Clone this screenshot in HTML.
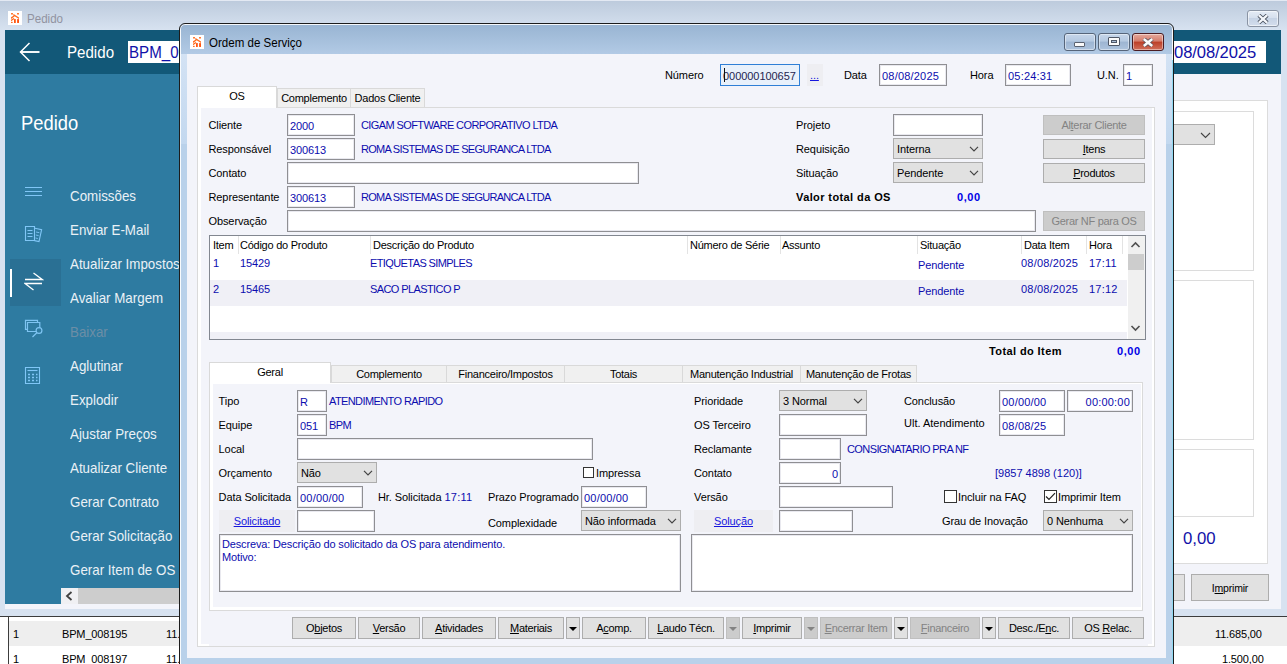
<!DOCTYPE html>
<html><head><meta charset="utf-8"><title>Ordem de Serviço</title>
<style>
*{box-sizing:border-box;margin:0;padding:0}
html,body{width:1287px;height:664px;overflow:hidden;background:#d9e3f0;font-family:"Liberation Sans",sans-serif;font-size:11px;color:#000}
.a{position:absolute}
.t{position:absolute;white-space:pre;line-height:14px;height:14px;font-size:11px;letter-spacing:-.1px}
.b{color:#0c0cae}
.u{letter-spacing:-.6px}
.dt{letter-spacing:.2px!important}
.n{letter-spacing:0!important}
.in{position:absolute;background:#fff;border:1px solid #8f8f93;height:22px;font-size:11px;line-height:22px;letter-spacing:-.1px;color:#0c0cae;padding-left:2px;white-space:pre;overflow:hidden;box-shadow:inset 0 0 0 1px #e9e9ef}
.sel{position:absolute;background:#e1e1e1;border:1px solid #adadad;height:21px;font-size:11px;line-height:21px;padding-left:3px;white-space:pre;letter-spacing:-.1px}
.sel svg{position:absolute;right:3px;top:7px}
.btn{letter-spacing:-.3px;position:absolute;background:#e1e1e1;border:1px solid #adadad;height:22px;font-size:11px;line-height:20px;text-align:center;white-space:pre}
.btn.d{background:#cccccc;border-color:#bfbfbf;color:#838383}
.btn u{text-decoration:underline}
.tab{letter-spacing:-.25px;position:absolute;background:#f0f0f0;border:1px solid #d9d9d9;border-bottom:none;text-align:center;font-size:11px;white-space:pre}
.tab.s{background:#fff}
.wb{border:1px solid #56657a;border-radius:3px;background:linear-gradient(#c6d6ea 0,#b5c9e1 45%,#9db5d2 50%,#adc3dd 100%);box-shadow:inset 0 0 0 1px rgba(255,255,255,.45)}
.gl{top:236px;width:1px;height:18px;background:#e3e3e3}
.gh{letter-spacing:-.25px}
.cb{width:11px;height:11px;border:1px solid #333;background:#fff}
.ar:after{content:"";position:absolute;left:2px;top:9px;border:4px solid transparent;border-top:4px solid #000;border-bottom:none}
.ar.d:after{border-top-color:#838383}
.sx{transform-origin:0 0;letter-spacing:0!important}
.mi{position:absolute;left:70px;color:#eaf1f6;font-size:14.5px;line-height:20px;height:20px;white-space:pre;transform-origin:0 0;transform:scaleX(.92)}
</style></head><body>
<!-- ================= OUTER WINDOW ================= -->
<div class="a" id="ow" style="left:0;top:0;width:1287px;height:664px;background:linear-gradient(#bccadc 0,#d7e2f0 30px,#d7e2f0 100%)"></div>
<div class="a" style="left:0;top:0;width:1287px;height:1px;background:#e3e9f3"></div>
<!-- title -->
<div class="a" id="oicon" style="left:8px;top:11px;width:14px;height:14px"><svg width="14" height="14" viewBox="0 0 14 14" style="display:block"><rect width="14" height="14" fill="#fff"/><g fill="#ff6a1c"><rect x="3" y="2" width="2" height="1.6" rx=".6"/><rect x="9" y="2" width="2" height="1.6" rx=".6"/><path d="M5.6 3l5.4 3.4v1.7L5 4.3z"/><path d="M3 6.2l2.8-1.6.9 1L3 8z"/><path d="M3 8.8l2.6-1.7.9 1L3 10.3z"/><rect x="6" y="8" width="1.8" height="4" rx=".5" fill="#ff5410"/><rect x="9.1" y="8" width="1.9" height="4" rx=".5" fill="#ff5410"/><rect x="3" y="10.8" width="1.7" height="1.3" rx=".4"/></g></svg></div>
<div class="t sx" style="left:27px;top:11px;font-size:12px;color:#9193a0;line-height:16px;height:16px;transform:scaleX(.965)">Pedido</div>
<div class="a" id="oclose" style="left:1247px;top:10px;width:32px;height:17px;border:1px solid #8a94a4;border-radius:3px;background:linear-gradient(#e4ebf5 0,#d6e0ee 45%,#c6d3e5 50%,#d3deed 100%);box-shadow:inset 0 0 0 1px rgba(255,255,255,.55)"><svg width="12" height="10" viewBox="0 0 12 10" style="position:absolute;left:9px;top:2.5px"><path d="M1.800 1.200l8.400 7.600M10.200 1.200l-8.400 7.600" stroke="#48505e" stroke-width="4"/><path d="M1.800 1.200l8.400 7.600M10.200 1.200l-8.400 7.600" stroke="#f4f6fa" stroke-width="2.300"/></svg></div>
<!-- header bar -->
<div class="a" style="left:5px;top:30px;width:1276px;height:44px;background:#125878"></div>
<div class="t sx" style="left:67px;top:42px;font-size:16.8px;line-height:22px;height:22px;color:#fff;transform:scaleX(.9)">Pedido</div>
<div class="a" style="left:128px;top:41px;width:120px;height:22px;background:#fff"></div>
<div class="t b sx" style="left:129px;top:42px;font-size:16.8px;line-height:22px;height:22px;color:#1010a8;transform:scaleX(.9)">BPM_008195</div>
<div class="a" style="left:1100px;top:41px;width:166px;height:22px;background:#fff"></div>
<div class="t" style="left:1174px;top:42px;font-size:16.6px;line-height:22px;height:22px;color:#1010a8">08/08/2025</div>
<!-- sidebar -->
<div class="a" style="left:5px;top:74px;width:600px;height:531px;background:#2e7ba1"></div>
<div class="t sx" style="left:21px;top:110px;font-size:20.2px;line-height:26px;height:26px;color:#fff;transform:scaleX(.91)">Pedido</div>
<div class="a" style="left:10px;top:259px;width:51px;height:47px;background:#2a7094"></div>
<div class="a" style="left:10px;top:269px;width:2px;height:28px;background:#fff"></div>
<div class="mi" style="top:186px">Comissões</div>
<div class="mi" style="top:220px">Enviar E-Mail</div>
<div class="mi" style="top:254px">Atualizar Impostos</div>
<div class="mi" style="top:288px">Avaliar Margem</div>
<div class="mi" style="top:322px;color:#6c8ea6">Baixar</div>
<div class="mi" style="top:356px">Aglutinar</div>
<div class="mi" style="top:390px">Explodir</div>
<div class="mi" style="top:424px">Ajustar Preços</div>
<div class="mi" style="top:458px">Atualizar Cliente</div>
<div class="mi" style="top:492px">Gerar Contrato</div>
<div class="mi" style="top:526px">Gerar Solicitação</div>
<div class="mi" style="top:560px">Gerar Item de OS</div>
<div class="a" style="left:61px;top:588px;width:400px;height:16px;background:#cdcdcd"></div>
<div class="a" style="left:61px;top:588px;width:17px;height:16px;background:#f0f0f3"></div>
<svg class="a" style="left:65px;top:591px" width="8" height="10" viewBox="0 0 8 10"><path d="M6.5 1L2 5l4.500 4" fill="none" stroke="#404040" stroke-width="1.8"/></svg>

<!-- sidebar icons -->
<svg class="a" style="left:18px;top:40px" width="24" height="24" viewBox="0 0 24 24"><path d="M11.500 3L2.500 12l9 9" fill="none" stroke="#fff" stroke-width="1.500"/><path d="M2.500 12H21.500" stroke="#fff" stroke-width="1.900"/></svg>
<svg class="a" style="left:24px;top:184px" width="20" height="14" viewBox="0 0 20 14"><path d="M1 3.5h17M1 7.5h17M1 11.5h17" stroke="#80c6f6" stroke-width="1"/></svg>
<svg class="a" style="left:24px;top:225px" width="20" height="19" viewBox="0 0 20 19"><g fill="none" stroke="#80c6f6" stroke-width="1.1"><path d="M1.5 1.5h9v14h-9z"/><path d="M3.5 5.5h5M3.5 8.5h5M3.5 11.5h5"/><path d="M11 3.2l6.6 1.4-2.6 12-4.5-1"/><path d="M12 7l3.3.7M11.8 10l2.8.6M11.5 13l2.3.5" stroke-width=".9"/></g></svg>
<svg class="a" style="left:24px;top:271px" width="20" height="21" viewBox="0 0 20 21"><path d="M1 8.5h17.2L9.5 2M18 12.5H1l8.5 6.5" fill="none" stroke="#fff" stroke-width="1.3"/></svg>
<svg class="a" style="left:24px;top:319px" width="20" height="20" viewBox="0 0 20 20"><g fill="none" stroke="#7ec4f2" stroke-width="1.200"><path d="M3.500 10.400h-2v-9h12v2"/><path d="M3.500 3.500h12.300v9h-12.300z"/><circle cx="15" cy="11.500" r="2.900" fill="#2e7ba1"/><path d="M12.800 13.800L8.500 18"/></g></svg>
<svg class="a" style="left:24px;top:366px" width="18" height="19" viewBox="0 0 18 19"><g fill="none" stroke="#80c6f6" stroke-width="1.1"><path d="M1.5 1.5h14v16h-14z"/><path d="M3.5 4.5h10"/><path d="M4 8.5h2M8 8.5h2M12 8.5h1.500M4 11.5h2M8 11.5h2M12 11.5h1.5M4 14.500h2M8 14.500h2M12 14.500h1.5" stroke-width="1.4"/></g></svg>
<!-- bottom grid of outer -->
<div class="a" style="left:5px;top:604px;width:1276px;height:5px;background:#f3f4fa"></div>
<div class="a" style="left:0;top:616px;width:1287px;height:1px;background:#3c3c3c"></div>
<div class="a" style="left:0;top:617px;width:1287px;height:47px;background:#fff"></div>
<div class="a" style="left:8px;top:616px;width:1px;height:48px;background:#3c3c3c"></div>
<div class="a" style="left:9px;top:621px;width:171px;height:25px;background:#eeeeee"></div>
<div class="a" style="left:1174px;top:617px;width:113px;height:29px;background:#eeeeee"></div>
<div class="t" style="left:13px;top:627px">1</div>
<div class="t" style="left:62px;top:627px;letter-spacing:-.15px">BPM_008195</div>
<div class="t" style="left:166px;top:627px">11.</div>
<div class="t" style="left:13px;top:652px">1</div>
<div class="t" style="left:62px;top:652px;letter-spacing:-.15px">BPM_008197</div>
<div class="t" style="left:166px;top:652px">11.</div>
<div class="t" style="left:1215px;top:627px;letter-spacing:-.15px">11.685,00</div>
<div class="t" style="left:1222px;top:652px;letter-spacing:-.15px">1.500,00</div>
<!-- right side of outer window -->
<div class="a" id="rp" style="left:1172px;top:74px;width:109px;height:535px;background:#f3f4fa"></div>
<div class="a" style="left:1172px;top:100px;width:96px;height:464px;background:#fff;border:1px solid #dcdcdc"></div>
<div class="a" style="left:1172px;top:111px;width:82px;height:160px;border:1px solid #dcdcdc"></div>
<div class="a" style="left:1172px;top:280px;width:82px;height:160px;border:1px solid #dcdcdc"></div>
<div class="a" style="left:1172px;top:449px;width:82px;height:68px;border:1px solid #dcdcdc"></div>
<div class="sel" style="left:1150px;top:124px;width:65px;height:21px"><svg width="11" height="7" viewBox="0 0 11 7" style="position:absolute;right:3px;top:7px"><path d="M1 1l4.5 4.5L10 1" fill="none" stroke="#444" stroke-width="1.1"/></svg></div>
<div class="t sx" style="left:1183px;top:528px;font-size:16.8px;line-height:22px;height:22px;color:#1010a8">0,00</div>
<div class="btn" style="left:1150px;top:574px;width:35px;height:27px"></div>
<div class="btn" style="left:1191px;top:574px;width:78px;height:27px;line-height:27px;font-size:10.5px;letter-spacing:-.2px">I<u>m</u>primir</div>

<!-- ================= DIALOG ================= -->
<div class="a" id="dlg" style="left:179px;top:23px;width:995px;height:650px;border:1px solid #1c1c1c;border-radius:6px;box-shadow:inset 0 0 0 1px rgba(255,255,255,.9);background:linear-gradient(#98b4d2 0,#b2cae5 30px,#b9d1ea 31px,#b9d1ea 100%)"></div>
<div class="a" style="left:181px;top:54px;width:6px;height:90px;background:linear-gradient(#d3e2f4,#c3d8ef)"></div>
<div class="a" style="left:1166px;top:54px;width:6px;height:90px;background:linear-gradient(#d3e2f4,#c3d8ef)"></div>
<div class="a" style="left:1172px;top:60px;width:1px;height:610px;background:#8fd9f2"></div>
<div class="a" id="dicon" style="left:190px;top:35px;width:14px;height:14px"><svg width="14" height="14" viewBox="0 0 14 14" style="display:block"><rect width="14" height="14" fill="#fff"/><g fill="#ff6a1c"><rect x="3" y="2" width="2" height="1.6" rx=".6"/><rect x="9" y="2" width="2" height="1.6" rx=".6"/><path d="M5.6 3l5.4 3.4v1.7L5 4.3z"/><path d="M3 6.2l2.8-1.6.9 1L3 8z"/><path d="M3 8.8l2.6-1.7.9 1L3 10.3z"/><rect x="6" y="8" width="1.8" height="4" rx=".5" fill="#ff5410"/><rect x="9.1" y="8" width="1.9" height="4" rx=".5" fill="#ff5410"/><rect x="3" y="10.8" width="1.7" height="1.3" rx=".4"/></g></svg></div>
<div class="t sx" style="left:209px;top:35px;font-size:12px;line-height:16px;height:16px;transform:scaleX(.962)">Ordem de Serviço</div>
<div class="a" id="client" style="left:187px;top:54px;width:979px;height:604px;background:#f3f4fa"></div>

<!-- window buttons -->
<div class="a wb" style="left:1064px;top:33px;width:32px;height:18px"><div class="a" style="left:9px;top:8px;width:11px;height:5px;background:#fafafa;border:1px solid #5a6270;border-radius:1px"></div></div>
<div class="a wb" style="left:1098px;top:33px;width:32px;height:18px"><div class="a" style="left:9px;top:3px;width:12px;height:9px;background:#fafafa;border:1px solid #4f5766;border-radius:1px"></div><div class="a" style="left:12px;top:6px;width:6px;height:3px;background:#a9bdd6;border:1px solid #4f5766"></div></div>
<div class="a wb" style="left:1132px;top:33px;width:32px;height:18px;background:linear-gradient(#e5aa9e 0,#d47c6b 45%,#bc3f27 50%,#d06f5b 100%);border-color:#4b1c22"><svg width="12" height="9" viewBox="0 0 12 9" style="position:absolute;left:9px;top:3.5px"><path d="M1.800 1l8.400 7M10.200 1l-8.400 7" stroke="#5a4f5a" stroke-width="4.200"/><path d="M1.800 1l8.400 7M10.200 1l-8.400 7" stroke="#fafafa" stroke-width="2.600"/></svg></div>
<!-- top row -->
<div class="t" style="left:665px;top:68px">Número</div>
<div class="in" style="left:720px;top:64px;width:80px;border-color:#2f7fd6;background:#e9f1fb;box-shadow:none;color:#25254f;letter-spacing:-.05px">000000100657</div>
<div class="a" style="left:724px;top:68px;width:1px;height:14px;background:#111"></div>
<div class="a" style="left:807px;top:64px;width:16px;height:22px;background:#eeeef2"></div>
<div class="t b" style="left:810px;top:68px;text-decoration:underline;color:#1616de">...</div>
<div class="t" style="left:844px;top:68px">Data</div>
<div class="in dt" style="left:879px;top:64px;width:68px">08/08/2025</div>
<div class="t" style="left:970px;top:68px">Hora</div>
<div class="in dt" style="left:1005px;top:64px;width:66px">05:24:31</div>
<div class="t" style="left:1097px;top:68px">U.N.</div>
<div class="in" style="left:1123px;top:64px;width:30px">1</div>
<!-- top tabs -->
<div class="a" id="tp1" style="left:197px;top:107px;width:958px;height:540px;background:#fff;border:1px solid #dadada"></div>
<div class="a" style="left:201px;top:108px;width:951px;height:538px;background:#f3f4fa"></div><div class="a" style="left:198px;top:644px;width:11px;height:2px;background:#fff"></div><div class="a" style="left:1148px;top:644px;width:5px;height:2px;background:#fff"></div>
<div class="tab s" style="left:197px;top:86px;width:80px;height:22px;line-height:19px">OS</div>
<div class="tab" style="left:277px;top:88px;width:74px;height:19px;line-height:19px">Complemento</div>
<div class="tab" style="left:350px;top:88px;width:75px;height:19px;line-height:19px">Dados Cliente</div>
<!-- left fields -->
<div class="t" style="left:208.500px;top:118px">Cliente</div>
<div class="in" style="left:287px;top:114px;width:68px">2000</div>
<div class="t b u" style="left:361px;top:118px">CIGAM SOFTWARE CORPORATIVO LTDA</div>
<div class="t" style="left:208.500px;top:142px">Responsável</div>
<div class="in" style="left:287px;top:138px;width:68px">300613</div>
<div class="t b u" style="left:361px;top:142px;letter-spacing:-.72px">ROMA SISTEMAS DE SEGURANCA LTDA</div>
<div class="t" style="left:208.500px;top:166px">Contato</div>
<div class="in" style="left:287px;top:162px;width:352px"></div>
<div class="t" style="left:208.500px;top:190px">Representante</div>
<div class="in" style="left:287px;top:186px;width:68px">300613</div>
<div class="t b u" style="left:361px;top:190px;letter-spacing:-.72px">ROMA SISTEMAS DE SEGURANCA LTDA</div>
<div class="t" style="left:208.500px;top:214px">Observação</div>
<div class="in" style="left:287px;top:210px;width:749px"></div>
<!-- right fields -->
<div class="t" style="left:796px;top:118px">Projeto</div>
<div class="in" style="left:893px;top:114px;width:90px"></div>
<div class="t" style="left:796px;top:142px">Requisição</div>
<div class="sel" style="left:893px;top:138px;width:90px">Interna <svg width="10" height="6" viewBox="0 0 10 6"><path d="M1 .8l4 4 4-4" fill="none" stroke="#444" stroke-width="1.2"/></svg></div>
<div class="t" style="left:796px;top:166px">Situação</div>
<div class="sel" style="left:893px;top:162px;width:90px">Pendente <svg width="10" height="6" viewBox="0 0 10 6"><path d="M1 .8l4 4 4-4" fill="none" stroke="#444" stroke-width="1.2"/></svg></div>
<div class="t" style="left:796px;top:190px;font-weight:bold;letter-spacing:.4px">Valor total da OS</div>
<div class="t" style="left:957px;top:190px;font-weight:bold;color:#0000e6;letter-spacing:.6px">0,00</div>
<div class="btn d" style="left:1043px;top:115px;width:102px;height:20px;line-height:18px">Al<u>t</u>erar Cliente</div>
<div class="btn" style="left:1043px;top:139px;width:102px;height:20px;line-height:18px"><u>I</u>tens</div>
<div class="btn" style="left:1043px;top:163px;width:102px;height:20px;line-height:18px"><u>P</u>rodutos</div>
<div class="btn d" style="left:1043px;top:211px;width:102px;height:20px;line-height:18px">Gerar NF para OS</div>

<!-- grid -->
<div class="a" id="grid" style="left:209px;top:235px;width:937px;height:105px;background:#fff;border:1px solid #828790"></div>
<div class="a" style="left:210px;top:280px;width:917px;height:26px;background:#f0f0f6"></div>
<div class="a" style="left:210px;top:332px;width:917px;height:7px;background:#f0f0f6"></div>
<div class="a" style="left:1128px;top:236px;width:17px;height:103px;background:#f0f0f0"></div>
<div class="a" style="left:1128px;top:254px;width:16px;height:16px;background:#cdcdcd"></div>
<svg class="a" style="left:1130px;top:241px" width="11" height="7" viewBox="0 0 11 7"><path d="M1.5 6L5.5 2l4 4" fill="none" stroke="#505050" stroke-width="1.6"/></svg>
<svg class="a" style="left:1130px;top:325px" width="11" height="7" viewBox="0 0 11 7"><path d="M1.5 1l4 4 4-4" fill="none" stroke="#505050" stroke-width="1.6"/></svg>
<div class="a gl" style="left:238px"></div><div class="a gl" style="left:370px"></div><div class="a gl" style="left:687px"></div><div class="a gl" style="left:780px"></div><div class="a gl" style="left:917px"></div><div class="a gl" style="left:1021px"></div><div class="a gl" style="left:1086px"></div><div class="a gl" style="left:1122px"></div>
<div class="t gh" style="left:213px;top:238px">Item</div>
<div class="t gh" style="left:240px;top:238px">Código do Produto</div>
<div class="t gh" style="left:373px;top:238px">Descrição do Produto</div>
<div class="t gh" style="left:690px;top:238px">Número de Série</div>
<div class="t gh" style="left:782px;top:238px">Assunto</div>
<div class="t gh" style="left:920px;top:238px">Situação</div>
<div class="t gh" style="left:1024px;top:238px">Data Item</div>
<div class="t gh" style="left:1089px;top:238px">Hora</div>
<div class="t b" style="left:213px;top:256px">1</div>
<div class="t b" style="left:240px;top:256px">15429</div>
<div class="t b u" style="left:370px;top:256px">ETIQUETAS SIMPLES</div>
<div class="t b" style="left:918px;top:258px">Pendente</div>
<div class="t b dt" style="left:1021px;top:256px">08/08/2025</div>
<div class="t b dt" style="left:1089px;top:256px">17:11</div>
<div class="t b" style="left:213px;top:282px">2</div>
<div class="t b" style="left:240px;top:282px">15465</div>
<div class="t b u" style="left:370px;top:282px">SACO PLASTICO P</div>
<div class="t b" style="left:918px;top:284px">Pendente</div>
<div class="t b dt" style="left:1021px;top:282px">08/08/2025</div>
<div class="t b dt" style="left:1089px;top:282px">17:12</div>
<div class="t" style="left:989px;top:344px;font-weight:bold;letter-spacing:.4px">Total do Item</div>
<div class="t" style="left:1117px;top:344px;font-weight:bold;color:#0000e6;letter-spacing:.6px">0,00</div>
<!-- lower tabs -->
<div class="a" id="tp2" style="left:209px;top:382px;width:934px;height:229px;background:#fff;border:1px solid #dadada"></div>
<div class="a" style="left:213px;top:384px;width:928px;height:223px;background:#f3f4fa"></div>
<div class="tab s" style="left:209px;top:362px;width:122px;height:21px;line-height:18px">Geral</div>
<div class="tab" style="left:331px;top:365px;width:116px;height:17px;line-height:17px">Complemento</div>
<div class="tab" style="left:446px;top:365px;width:119px;height:17px;line-height:17px">Financeiro/Impostos</div>
<div class="tab" style="left:564px;top:365px;width:119px;height:17px;line-height:17px">Totais</div>
<div class="tab" style="left:682px;top:365px;width:119px;height:17px;line-height:17px">Manutenção Industrial</div>
<div class="tab" style="left:800px;top:365px;width:117px;height:17px;line-height:17px">Manutenção de Frotas</div>
<!-- lower-left -->
<div class="t" style="left:218.600px;top:394px">Tipo</div>
<div class="in" style="left:297px;top:390px;width:30px">R</div>
<div class="t b u" style="left:329px;top:394px">ATENDIMENTO RAPIDO</div>
<div class="t" style="left:218.600px;top:418px">Equipe</div>
<div class="in" style="left:297px;top:414px;width:30px">051</div>
<div class="t b u" style="left:329px;top:418px">BPM</div>
<div class="t" style="left:218.600px;top:442px">Local</div>
<div class="in" style="left:297px;top:438px;width:296px"></div>
<div class="t" style="left:218.600px;top:466px">Orçamento</div>
<div class="sel" style="left:297px;top:462px;width:80px;">Não <svg width="10" height="6" viewBox="0 0 10 6"><path d="M1 .8l4 4 4-4" fill="none" stroke="#444" stroke-width="1.2"/></svg></div>
<div class="a cb" style="left:583px;top:467px"></div>
<div class="t" style="left:596px;top:466px">Impressa</div>
<div class="t" style="left:218.600px;top:490px">Data Solicitada</div>
<div class="in dt" style="left:297px;top:486px;width:66px">00/00/00</div>
<div class="t" style="left:378px;top:490px">Hr. Solicitada</div>
<div class="t b dt" style="left:444.5px;top:490px">17:11</div>
<div class="t" style="left:488px;top:490px">Prazo Programado</div>
<div class="in dt" style="left:581px;top:486px;width:66px">00/00/00</div>
<div class="a" style="left:219px;top:510px;width:76px;height:22px;background:#eeeef2"></div>
<div class="t" style="left:219px;top:514px;width:76px;text-align:center;color:#1616de;text-decoration:underline">Solicitado</div>
<div class="in" style="left:297px;top:510px;width:78px"></div>
<div class="t" style="left:488px;top:516px">Complexidade</div>
<div class="sel" style="left:581px;top:510px;width:100px;">Não informada <svg width="10" height="6" viewBox="0 0 10 6"><path d="M1 .8l4 4 4-4" fill="none" stroke="#444" stroke-width="1.2"/></svg></div>
<div class="in" style="left:219px;top:534px;width:462px;height:58px;line-height:13px;padding-top:3px;padding-left:2px;letter-spacing:-.15px">Descreva: Descrição do solicitado da OS para atendimento.
Motivo:</div>
<!-- lower-right -->
<div class="t" style="left:694px;top:394px">Prioridade</div>
<div class="sel" style="left:779px;top:390px;width:88px;">3 Normal <svg width="10" height="6" viewBox="0 0 10 6"><path d="M1 .8l4 4 4-4" fill="none" stroke="#444" stroke-width="1.2"/></svg></div>
<div class="t" style="left:904px;top:394px">Conclusão</div>
<div class="in dt" style="left:999px;top:390px;width:66px">00/00/00</div>
<div class="in dt" style="left:1067px;top:390px;width:66px;text-align:right;padding-right:2px">00:00:00</div>
<div class="t" style="left:694px;top:418px">OS Terceiro</div>
<div class="in" style="left:779px;top:414px;width:88px"></div>
<div class="t" style="left:904px;top:416px;letter-spacing:0">Ult. Atendimento</div>
<div class="in dt" style="left:999px;top:414px;width:66px">08/08/25</div>
<div class="t" style="left:694px;top:442px">Reclamante</div>
<div class="in" style="left:779px;top:438px;width:62px"></div>
<div class="t b u" style="left:847px;top:442px">CONSIGNATARIO PRA NF</div>
<div class="t" style="left:694px;top:466px">Contato</div>
<div class="in" style="left:779px;top:462px;width:62px;text-align:right;padding-right:2px">0</div>
<div class="t b n" style="left:995px;top:466px">[9857 4898 (120)]</div>
<div class="t" style="left:694px;top:490px">Versão</div>
<div class="in" style="left:779px;top:486px;width:114px"></div>
<div class="a cb" style="left:944px;top:490px;width:13px;height:13px"></div>
<div class="t" style="left:958px;top:490px">Incluir na FAQ</div>
<div class="a cb" style="left:1044px;top:490px;width:13px;height:13px"><svg width="11" height="11" viewBox="0 0 11 11" style="position:absolute;left:0;top:0"><path d="M1 5.500l3 3L10 2.200" fill="none" stroke="#222" stroke-width="1.200"/></svg></div>
<div class="t" style="left:1058px;top:490px">Imprimir Item</div>
<div class="a" style="left:694px;top:510px;width:79px;height:22px;background:#eeeef2"></div>
<div class="t" style="left:694px;top:514px;width:79px;text-align:center;color:#1616de;text-decoration:underline">Solução</div>
<div class="in" style="left:779px;top:510px;width:74px"></div>
<div class="t" style="left:942px;top:514px">Grau de Inovação</div>
<div class="sel" style="left:1043px;top:510px;width:90px;">0 Nenhuma <svg width="10" height="6" viewBox="0 0 10 6"><path d="M1 .8l4 4 4-4" fill="none" stroke="#444" stroke-width="1.2"/></svg></div>
<div class="in" style="left:691px;top:534px;width:442px;height:58px"></div>
<!-- bottom buttons -->
<div class="btn" style="left:292px;top:617px;width:64px">O<u>b</u>jetos</div>
<div class="btn" style="left:358px;top:617px;width:62px"><u>V</u>ersão</div>
<div class="btn" style="left:422px;top:617px;width:74px"><u>A</u>tividades</div>
<div class="btn" style="left:498px;top:617px;width:66px"><u>M</u>ateriais</div>
<div class="btn ar" style="left:566px;top:617px;width:14px"></div>
<div class="btn" style="left:582px;top:617px;width:64px">A<u>c</u>omp.</div>
<div class="btn" style="left:648px;top:617px;width:76px"><u>L</u>audo Técn.</div>
<div class="btn ar d" style="left:726px;top:617px;width:14px"></div>
<div class="btn" style="left:742px;top:617px;width:60px"><u>I</u>mprimir</div>
<div class="btn ar d" style="left:804px;top:617px;width:14px"></div>
<div class="btn d" style="left:820px;top:617px;width:72px"><u>E</u>ncerrar Item</div>
<div class="btn ar" style="left:894px;top:617px;width:14px"></div>
<div class="btn d" style="left:910px;top:617px;width:70px"><u>F</u>inanceiro</div>
<div class="btn ar" style="left:982px;top:617px;width:14px"></div>
<div class="btn" style="left:998px;top:617px;width:72px">Desc./E<u>n</u>c.</div>
<div class="btn" style="left:1072px;top:617px;width:72px">OS <u>R</u>elac.</div>

</body></html>
